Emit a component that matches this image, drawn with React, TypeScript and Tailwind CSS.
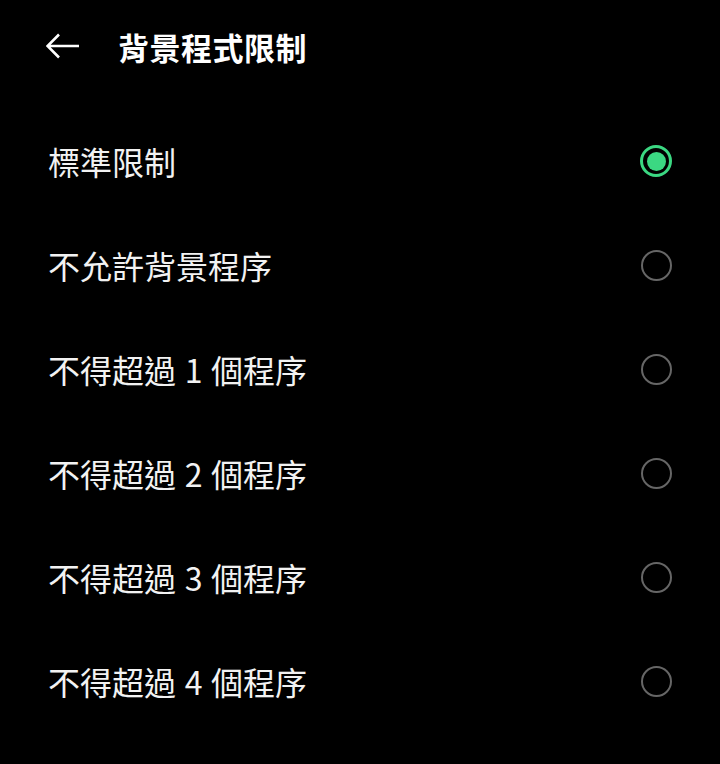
import React from "react";

const items = [
  "標準限制",
  "不允許背景程序",
  "不得超過 1 個程序",
  "不得超過 2 個程序",
  "不得超過 3 個程序",
  "不得超過 4 個程序",
];

function Radio({ checked }: { checked: boolean }) {
  if (checked) {
    return (
      <div className="w-[32px] h-[32px] rounded-full border-[3px] border-[#3bd882] flex items-center justify-center">
        <div className="w-[19px] h-[19px] rounded-full bg-[#3bd882]" />
      </div>
    );
  }
  return <div className="w-[31px] h-[31px] rounded-full border-2 border-[#666666]" />;
}

export default function App() {
  const font = { fontFamily: '"Noto Sans CJK TC", "Noto Sans", sans-serif' };
  return (
    <div className="w-[720px] h-[764px] bg-black text-white overflow-hidden" style={font}>
      <div className="h-[92px] flex items-center">
        <div className="ml-[46px] w-[34px] h-[34px] flex items-center justify-center">
          <svg width="34" height="26" viewBox="0 0 34 26" fill="none">
            <path d="M33 13H2M13 1.5L1.5 13L13 24.5" stroke="#ffffff" strokeWidth="2.6" strokeLinecap="butt" strokeLinejoin="miter" />
          </svg>
        </div>
        <div className="ml-[38px] text-[31px] font-semibold leading-none tracking-[0.5px]">背景程式限制</div>
      </div>
      <div className="pt-[17px]">
        {items.map((t, i) => (
          <div key={t} className="h-[104px] flex items-center justify-between pl-[48px] pr-[48px]">
            <span className="text-[32px] leading-none text-[#f2f2f2] [word-spacing:1.5px]">{t}</span>
            <Radio checked={i === 0} />
          </div>
        ))}
      </div>
    </div>
  );
}
